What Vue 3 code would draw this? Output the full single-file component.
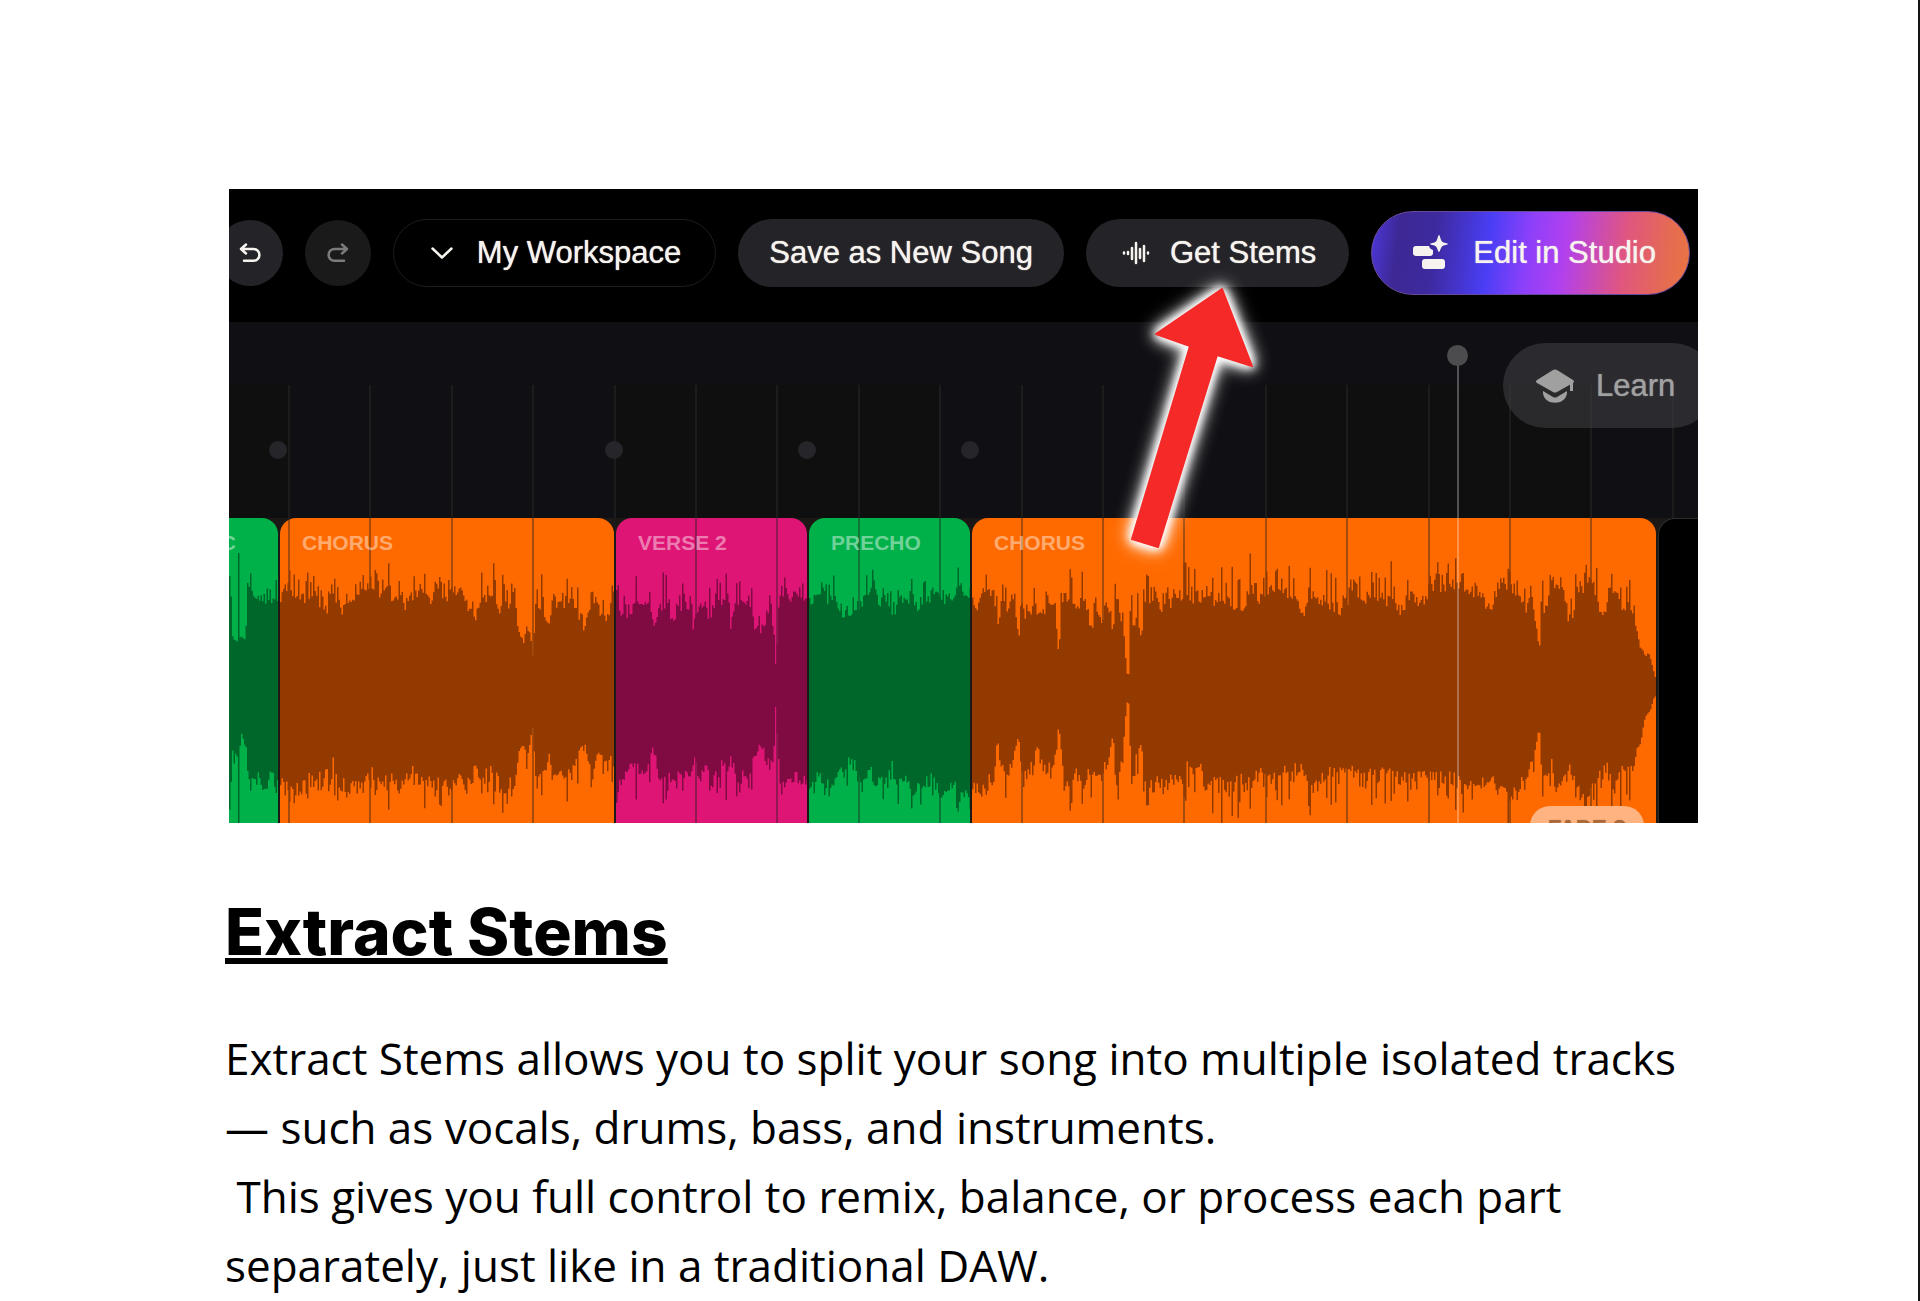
<!-- src/views/ExtractStems.vue -->
<template>
  <main class="page">
    <article class="article">
      <figure class="shot">
        <div class="toolbar">
          <button type="button" class="round" aria-label="Undo">
            <svg class="icon-history" viewBox="0 0 22 20">
              <path d="M7 1.500 2 6l5 4.500M2 6h12.500a5.800 5.800 0 0 1 0 11.800H5" />
            </svg>
          </button>
          <button type="button" class="round dim" aria-label="Redo">
            <svg class="icon-history" viewBox="0 0 22 20">
              <path d="M15 1.500 20 6l-5 4.500M20 6H7.500a5.800 5.800 0 0 0 0 11.800H17" />
            </svg>
          </button>
          <button type="button" class="pill outline">
            <svg class="icon-chevron" viewBox="0 0 22 12"><path d="m1.500 1.500 9.500 9 9.500-9" /></svg>
            <span>My Workspace</span>
          </button>
          <button type="button" class="pill save">Save as New Song</button>
          <button type="button" class="pill stems">
            <svg class="icon-wave" viewBox="0 0 28 24">
              <path d="M2 11.500v1M6 11v2M10 7v11M14 2v20M18 8v9M22 5v15M26 11.500v1" />
            </svg>
            <span>Get Stems</span>
          </button>
          <button type="button" class="pill studio">
            <svg class="icon-studio" viewBox="0 0 36 36">
              <path
                d="M3 11h13c1 3 2 3 4 4v3a3 3 0 0 1-3 3H3a3 3 0 0 1-3-3v-4a3 3 0 0 1 3-3ZM12 24h17a3 3 0 0 1 3 3v4a3 3 0 0 1-3 3H12a3 3 0 0 1-3-3v-4a3 3 0 0 1 3-3Z"
              />
              <path d="M26 0c1 0 1.500 5 3 6.500S35 8 35 9s-4.500 1-6 2.500-2 5.500-3 5.500-1.500-4-3-5.500-6-1.500-6-2.500 4.500-1 6-2.500S25 0 26 0Z" />
            </svg>
            <span>Edit in Studio</span>
          </button>
        </div>

        <div class="timeline">
          <svg class="layer" viewBox="0 0 1469 501" preserveAspectRatio="none">
            <rect class="band" x="0" y="63" width="60" height="133" />
            <rect class="band" x="386" y="63" width="325" height="133" />
            <rect class="band" x="1037" y="63" width="326" height="133" />
            <rect v-for="x in gridLines" :key="x" class="grid-line" :x="x" y="63" width="2" height="133" />
            <circle v-for="x in markers" :key="x" class="marker" :cx="x" cy="128" r="9" />
          </svg>

          <div class="lane">
            <div
              v-for="clip in clips"
              :key="clip.id"
              class="clip"
              :class="clip.tone"
              :style="{ flexGrow: clip.width }"
            >
              <svg v-if="clip.top" class="wave" :viewBox="`0 0 ${clip.width} 305`" preserveAspectRatio="none">
                <path :d="wavePath(clip)" />
              </svg>
              <span v-if="clip.label" class="clip-label">{{ clip.label }}</span>
            </div>
            <svg class="lane-grid" viewBox="0 0 1469 305" preserveAspectRatio="none">
              <rect v-for="x in gridLines.slice(0, -1)" :key="x" :x="x" y="0" width="2" height="305" />
            </svg>
            <button type="button" class="fade">FADE ?</button>
          </div>

          <div class="playhead"></div>

          <button type="button" class="learn">
            <svg class="icon-learn" viewBox="0 0 38 34">
              <path d="M17 1q2-1 4 0l16 10q2 1.500 0 3L21 23q-2 1-4 0L1 14q-2-1.500 0-3ZM7 22l10 6q2 1 4 0l10-6v2c-1 13-23 13-24 0Z" />
              <path d="M34 12h3v10h-3z" />
            </svg>
            <span>Learn</span>
          </button>
        </div>

        <svg class="arrow" viewBox="0 0 122 260">
          <path d="M91 1 25 46l34 12L1 251l26 8L86 67l35 11Z" />
        </svg>
      </figure>

      <h2>Extract Stems</h2>
      <p>
        Extract Stems allows you to split your song into multiple isolated tracks — such as vocals, drums, bass, and
        instruments.<br />&nbsp;This gives you full control to remix, balance, or process each part separately, just
        like in a traditional DAW.
      </p>
    </article>
  </main>
</template>

<script setup>
const gridLines = Array.from({ length: 18 }, (_, i) => Math.round(59 + i * 81.4))
const markers = [49, 385, 578, 741]

// top / bottom: flat [x, amplitude] pairs measured from the centre line of the clip
const clips = [
  {
    id: 1,
    label: 'PREC',
    tone: 'green cut',
    width: 49,
    spread: 18,
    top: [0, 110, 1, 110, 2, 50, 8, 45, 9, 135, 10, 50, 16, 45, 18, 105, 26, 86, 49, 92],
    bottom: [0, 115, 1, 115, 2, 62, 8, 70, 9, 135, 10, 60, 12, 44, 17, 65, 19, 94, 30, 90, 49, 95],
  },
  {
    id: 2,
    label: 'CHORUS',
    tone: 'orange',
    width: 334,
    spread: 28,
    top: [
      0, 85, 8, 101, 20, 95, 38, 88, 46, 76, 52, 98, 58, 76, 70, 88, 82, 98, 105, 100, 112, 88, 118, 91, 125, 83,
      135, 95, 145, 96, 150, 88, 165, 91, 180, 98, 190, 78, 195, 68, 200, 88, 212, 95, 216, 78, 222, 88, 228, 76,
      234, 85, 236, 71, 239, 51, 243, 45, 246, 60, 250, 51, 252, 31, 255, 78, 262, 88, 268, 61, 271, 85, 295, 88,
      298, 71, 305, 66, 310, 85, 315, 91, 321, 75, 326, 73, 330, 85, 334, 85,
    ],
    bottom: [
      0, 92, 10, 99, 30, 92, 53, 79, 58, 94, 80, 96, 88, 84, 100, 95, 125, 95, 135, 79, 140, 92, 160, 92, 175, 95,
      190, 97, 195, 77, 198, 95, 215, 79, 220, 95, 235, 92, 237, 65, 242, 54, 247, 65, 252, 39, 255, 82, 265, 92,
      268, 65, 271, 85, 285, 92, 297, 79, 301, 57, 308, 69, 312, 89, 315, 69, 325, 77, 334, 69,
    ],
  },
  {
    id: 3,
    label: 'VERSE 2',
    tone: 'pink',
    width: 191,
    spread: 28,
    top: [
      0, 81, 15, 73, 25, 88, 35, 81, 38, 66, 43, 88, 52, 81, 57, 68, 62, 85, 72, 81, 77, 64, 83, 88, 95, 71, 100, 88,
      110, 88, 115, 63, 118, 81, 130, 88, 135, 78, 138, 56, 142, 63, 148, 61, 152, 68, 157, 61, 159, 21, 161, 51,
      163, 95, 175, 91, 185, 98, 191, 88,
    ],
    bottom: [
      0, 92, 12, 79, 30, 89, 37, 60, 42, 89, 60, 92, 65, 75, 68, 95, 77, 65, 82, 92, 90, 79, 97, 95, 105, 72, 110, 89,
      114, 67, 120, 89, 133, 89, 138, 69, 143, 55, 150, 72, 157, 69, 159, 19, 161, 52, 163, 97, 175, 92, 191, 92,
    ],
  },
  {
    id: 4,
    label: 'PRECHO',
    tone: 'green',
    width: 161,
    spread: 22,
    top: [
      0, 88, 10, 98, 15, 88, 25, 95, 30, 81, 36, 73, 42, 72, 48, 81, 55, 91, 62, 101, 70, 91, 75, 95, 80, 85, 83, 73,
      90, 91, 105, 88, 110, 81, 118, 91, 130, 98, 140, 88, 150, 95, 161, 91,
    ],
    bottom: [
      0, 95, 20, 92, 28, 85, 35, 82, 42, 65, 48, 89, 53, 99, 58, 82, 65, 85, 72, 95, 78, 100, 82, 70, 86, 102, 92, 89,
      100, 99, 115, 92, 125, 95, 132, 105, 140, 102, 161, 105,
    ],
  },
  {
    id: 5,
    label: 'CHORUS',
    tone: 'orange',
    width: 684,
    spread: 38,
    top: [
      0, 91, 5, 83, 10, 98, 20, 88, 24, 81, 26, 58, 29, 95, 34, 75, 38, 95, 42, 85, 45, 58, 46, 43, 49, 85, 56, 71,
      62, 88, 68, 71, 75, 88, 82, 85, 84, 58, 86, 32, 88, 61, 91, 95, 95, 95, 105, 81, 112, 88, 119, 58, 122, 91,
      128, 71, 135, 85, 140, 55, 144, 81, 150, 65, 152, 45, 154, 13, 156, 13, 158, 88, 161, 55, 164, 81, 167, 55,
      169, 48, 172, 88, 175, 81, 183, 98, 189, 81, 200, 91, 235, 91, 250, 88, 267, 80, 275, 91, 290, 95, 303, 98,
      315, 98, 325, 85, 331, 71, 335, 91, 345, 91, 355, 85, 368, 78, 375, 91, 380, 101, 392, 85, 400, 95, 420, 88,
      430, 78, 438, 95, 446, 81, 457, 98, 465, 105, 485, 99, 500, 93, 510, 98, 512, 81, 520, 81, 525, 101, 535, 98,
      550, 91, 554, 78, 558, 98, 562, 75, 565, 48, 567, 42, 569, 88, 574, 78, 578, 108, 588, 108, 593, 75, 600, 75,
      604, 101, 610, 91, 615, 111, 621, 108, 625, 81, 634, 75, 636, 101, 645, 95, 650, 75, 654, 88, 660, 75, 664, 58,
      668, 38, 673, 31, 676, 35, 680, 18, 684, 3,
    ],
    bottom: [
      0, 102, 10, 105, 20, 85, 26, 52, 29, 85, 34, 89, 40, 75, 46, 45, 49, 89, 60, 75, 65, 55, 70, 79, 80, 79, 84, 59,
      86, 35, 89, 65, 92, 102, 105, 85, 112, 99, 120, 79, 128, 89, 135, 75, 140, 45, 145, 92, 150, 69, 154, 14,
      156, 13, 158, 72, 161, 82, 165, 65, 168, 55, 172, 85, 175, 99, 195, 95, 205, 89, 213, 79, 220, 85, 227, 75,
      232, 92, 250, 95, 280, 95, 290, 85, 300, 89, 315, 85, 328, 82, 335, 95, 350, 95, 360, 85, 380, 79, 395, 92,
      405, 85, 425, 85, 445, 92, 475, 92, 500, 99, 520, 95, 545, 105, 555, 79, 561, 72, 565, 45, 567, 42, 569, 79,
      573, 95, 578, 72, 583, 105, 598, 75, 600, 95, 615, 109, 625, 95, 634, 79, 640, 105, 648, 85, 655, 79, 660, 79,
      664, 59, 668, 55, 672, 29, 677, 22, 680, 12, 684, 2,
    ],
  },
  { id: 6, label: '', tone: 'empty', width: 40 },
]

function amplitudeAt(points, x) {
  let i = 0
  while (i < points.length - 4 && points[i + 2] < x) i += 2
  const [x0, a0, x1, a1] = points.slice(i, i + 4)
  const t = Math.min(1, Math.max(0, (x - x0) / (x1 - x0)))
  return a0 + (a1 - a0) * t
}

function wavePath({ id, width, spread, top, bottom }) {
  const centre = 170
  const step = 1.5
  let seed = id * 7919
  const random = () => {
    seed = (seed * 16807) % 2147483647
    return seed / 2147483647
  }
  const upper = []
  const lower = []
  for (let x = 0; x < width; x += step) {
    // transients hit both halves, quiet parts stay clean
    const hit = random() < 0.22 ? (0.25 + random() * 0.75) * spread : 0
    const edge = (points) => {
      const base = amplitudeAt(points, x)
      const noise = base > 62 ? hit * (0.7 + random() * 0.3) + random() ** 3 * 14 - random() ** 2 * 10 : random() * 3
      return base + noise
    }
    upper.push(`V${(centre - edge(top)).toFixed(1)}H${x + step}`)
    lower.unshift(`V${(centre + edge(bottom)).toFixed(1)}H${x}`)
  }
  return `M0,${centre}${upper.join('')}${lower.join('')}Z`
}
</script>

<style>
body {
  margin: 0;
  background: #fff;
}
</style>

<style scoped>
.page {
  box-sizing: border-box;
  min-height: 100vh;
  border-right: 2px solid #141414;
  overflow: hidden;
  color: #000;
  font-family: 'Open Sans', 'Noto Sans', sans-serif;
}

.article {
  padding: 189px 220px 0 225px;
}

.shot {
  position: relative;
  margin: 0 0 0 4px;
  overflow: hidden;
  background: #000;
  font-family: 'Liberation Sans', Arial, sans-serif;
}

button {
  display: flex;
  align-items: center;
  justify-content: center;
  box-sizing: border-box;
  flex: none;
  margin: 0;
  padding: 0;
  border: 0;
  color: #f7f4ef;
  font-family: inherit;
  font-size: 31px;
  line-height: 36px;
  text-shadow: 0 0 1px currentColor;
  white-space: nowrap;
}

svg {
  flex: none;
}

/* toolbar */
.toolbar {
  display: flex;
  align-items: center;
  justify-content: flex-end;
  gap: 22px;
  height: 133px;
  padding: 0 8px 5px 0;
  box-sizing: border-box;
}

.toolbar path {
  fill: none;
  stroke: currentColor;
  stroke-width: 2.5;
  stroke-linecap: round;
  stroke-linejoin: round;
}

.round {
  width: 66px;
  height: 66px;
  border-radius: 50%;
  background: #242428;
}

.round.dim {
  background: #1a1a1a;
  color: #7c7b79;
}

.icon-history {
  width: 22px;
  height: 20px;
}

.pill {
  height: 68px;
  padding: 0 33px;
  border-radius: 34px;
  background: #242428;
}

.pill.outline {
  gap: 24px;
  padding: 0 34px 0 37px;
  border: 1px solid #1d1d1d;
  background: #000;
}

.icon-chevron {
  width: 22px;
  height: 12px;
}

.pill.save {
  padding: 0 31px;
}

.pill.stems {
  gap: 20px;
  padding: 0 33px 0 36px;
}

.icon-wave {
  width: 28px;
  height: 24px;
}

.pill.studio {
  gap: 24px;
  height: 84px;
  padding: 0 33px 0 41px;
  border: 1px solid #6a4a9a;
  border-radius: 42px;
  background: linear-gradient(97deg, #4d38dd 0%, #3d2894 9%, #3d2a9e 20%, #4a3ef5 37%, #8c40fa 49%, #b140ef 60%, #e0567f 79%, #e56b52 92%, #ea7440 100%);
}

.icon-studio {
  width: 36px;
  height: 36px;
}

.icon-studio path {
  fill: currentColor;
  stroke: none;
}

/* timeline */
.timeline {
  position: relative;
  height: 501px;
  padding-top: 196px;
  box-sizing: border-box;
  overflow: hidden;
  background: #101014;
}

.layer,
.lane-grid,
.wave {
  position: absolute;
  inset: 0;
  width: 100%;
  height: 100%;
}

.band {
  fill: #0f0f0f;
}

.grid-line {
  fill: #1c1c1c;
}

.marker {
  fill: #26262a;
}

.lane {
  position: relative;
  z-index: 0;
  display: flex;
  gap: 2px;
  height: 305px;
  background: #1c1816;
}

.clip {
  position: relative;
  flex: 1 1 0;
  min-width: 0;
  overflow: hidden;
  border-radius: 16px 16px 0 0;
}

.orange {
  background: #ff6a00;
}

.pink {
  background: #de1575;
}

.green {
  background: #00b049;
}

.cut {
  border-top-left-radius: 0;
}

.empty {
  border-top-right-radius: 0;
  background: #000;
  box-shadow: inset 1px 1px 0 #2c2c2c;
}

.lane-grid {
  z-index: 1;
  fill: rgba(30, 30, 30, 0.4);
}

.wave {
  z-index: 2;
}

.orange .wave {
  fill: #933a00;
}

.pink .wave {
  fill: #800b43;
}

.green .wave {
  fill: #00672a;
}

.clip-label {
  position: absolute;
  z-index: 3;
  top: 13px;
  left: 22px;
  color: rgba(255, 255, 255, 0.45);
  font-size: 21px;
  font-weight: 700;
  line-height: 24px;
  white-space: nowrap;
}

.cut .clip-label {
  right: 42px;
  left: auto;
}

.fade {
  position: absolute;
  z-index: 3;
  top: 288px;
  right: 54px;
  width: 114px;
  height: 44px;
  border-radius: 20px;
  background: #ffb380;
  color: #a8683a;
  font-size: 22px;
  font-weight: 700;
}

.playhead {
  position: absolute;
  top: 33px;
  right: 239px;
  bottom: 0;
  width: 2px;
  background: rgba(255, 255, 255, 0.28);
}

.playhead::before {
  content: '';
  position: absolute;
  top: -10px;
  left: -10px;
  width: 21px;
  height: 21px;
  border-radius: 50%;
  background: #4c4c4e;
}

.learn {
  position: absolute;
  top: 21px;
  right: -17px;
  justify-content: flex-start;
  gap: 22px;
  width: 212px;
  height: 85px;
  padding-left: 33px;
  border-radius: 43px;
  background: rgba(66, 66, 70, 0.55);
  color: #a0a0a0;
}

.icon-learn {
  width: 38px;
  height: 34px;
  fill: currentColor;
}

/* pointer over the toolbar */
.arrow {
  position: absolute;
  top: 99px;
  left: 902px;
  width: 122px;
  height: 260px;
  overflow: visible;
  fill: #f52a28;
  stroke: #f52a28;
  stroke-width: 2;
  stroke-linejoin: round;
  filter: drop-shadow(0 0 4px #fff) drop-shadow(0 0 4px #fff) drop-shadow(0 0 8px #fff);
}

/* copy */
h2 {
  margin: 69px 0 0;
  font-family: Inter, 'Open Sans', sans-serif;
  font-size: 64px;
  font-weight: 800;
  line-height: 80px;
  text-decoration: underline;
  text-decoration-thickness: 6px;
  text-decoration-skip-ink: none;
  text-underline-offset: 3px;
}

p {
  margin: 52px 0 0;
  font-size: 44px;
  line-height: 69px;
}
</style>
